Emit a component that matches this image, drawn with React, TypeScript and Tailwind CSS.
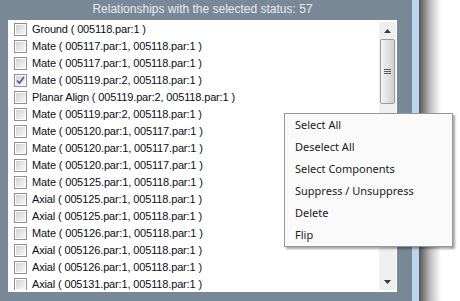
const rows = [
  { name: "Ground", refs: "005118.par:1", checked: false },
  { name: "Mate", refs: "005117.par:1, 005118.par:1", checked: false },
  { name: "Mate", refs: "005117.par:1, 005118.par:1", checked: false },
  { name: "Mate", refs: "005119.par:2, 005118.par:1", checked: true },
  { name: "Planar Align", refs: "005119.par:2, 005118.par:1", checked: false },
  { name: "Mate", refs: "005119.par:2, 005118.par:1", checked: false },
  { name: "Mate", refs: "005120.par:1, 005117.par:1", checked: false },
  { name: "Mate", refs: "005120.par:1, 005117.par:1", checked: false },
  { name: "Mate", refs: "005120.par:1, 005117.par:1", checked: false },
  { name: "Mate", refs: "005125.par:1, 005118.par:1", checked: false },
  { name: "Axial", refs: "005125.par:1, 005118.par:1", checked: false },
  { name: "Axial", refs: "005125.par:1, 005118.par:1", checked: false },
  { name: "Mate", refs: "005126.par:1, 005118.par:1", checked: false },
  { name: "Axial", refs: "005126.par:1, 005118.par:1", checked: false },
  { name: "Axial", refs: "005126.par:1, 005118.par:1", checked: false },
  { name: "Axial", refs: "005131.par:1, 005118.par:1", checked: false },
];

const menuItems = ["Select All", "Deselect All", "Select Components", "Suppress / Unsuppress", "Delete", "Flip"];

function CheckBox({ checked }: { checked: boolean }) {
  return (
    <div className="w-[13px] h-[13px] shrink-0 border border-[#8e8f8f] bg-white p-px">
      <div className="w-full h-full bg-gradient-to-br from-[#d2d2d2] to-[#f7f7f7] flex items-center justify-center">
        {checked && (
          <svg width="9" height="9" viewBox="0 0 9 9">
            <path d="M1 4.5 L3.5 7 L8 1" fill="none" stroke="#3d5aa8" strokeWidth="1.6" />
          </svg>
        )}
      </div>
    </div>
  );
}

function ScrollBar() {
  return (
    <div className="w-[17px] h-full bg-[#efefef] flex flex-col">
      <div className="h-[17px] flex items-center justify-center">
        <svg width="7" height="4" viewBox="0 0 7 4">
          <path d="M3.5 0 L7 4 L0 4 Z" fill="#3a3a3a" />
        </svg>
      </div>
      <div className="h-[65px] mx-px rounded-[2px] border border-[#9c9c9c] bg-gradient-to-r from-[#f4f4f4] via-[#e2e2e2] to-[#d0d0d0] flex flex-col items-center justify-center gap-px">
        <div className="w-[7px] h-px bg-[#5c5c5c]" />
        <div className="w-[7px] h-px bg-[#5c5c5c]" />
        <div className="w-[7px] h-px bg-[#5c5c5c]" />
      </div>
      <div className="flex-1" />
      <div className="h-[17px] flex items-center justify-center">
        <svg width="7" height="4" viewBox="0 0 7 4">
          <path d="M0 0 L7 0 L3.5 4 Z" fill="#3a3a3a" />
        </svg>
      </div>
    </div>
  );
}

export default function App() {
  return (
    <div className="relative w-[460px] h-[301px] flex bg-white overflow-hidden">
      <div className="w-[412px] h-full bg-[#798897] flex flex-col pl-2 pr-[15px]">
        <div className="h-5 text-center text-[12px] leading-[19px] text-[#e6ebf0] font-['Liberation_Sans',sans-serif]">
          Relationships with the selected status: 57
        </div>
        <div className="h-[272px] bg-white flex pt-[2px] pr-px pb-[2px]">
          <div className="flex-1 -mt-px overflow-hidden">
            {rows.map((row, i) => (
              <div key={i} className="h-[17px] flex items-center pl-[6px] gap-[5px]">
                <CheckBox checked={row.checked} />
                <span className="text-[11px] tracking-[-0.15px] text-[#0c0c1a] whitespace-nowrap font-['Liberation_Sans',sans-serif]">
                  {row.name} ( {row.refs} )
                </span>
              </div>
            ))}
          </div>
          <ScrollBar />
        </div>
      </div>
      <div className="w-[7px] h-full bg-[#bad5f0]" />
      <div className="w-[22px] h-full bg-gradient-to-r from-[#555555] via-[#bdbdbd] to-white" />

      <div className="absolute left-[284px] top-[113px] w-[169px] border border-[#979797] bg-[#fafafa] shadow-[2px_2px_2px_rgba(0,0,0,0.35)]">
        {menuItems.map((item) => (
          <div key={item} className="h-[22px] flex items-center pl-[10px] text-[11px] text-[#1a1a1a] font-['Noto_Sans',sans-serif]">
            {item}
          </div>
        ))}
      </div>
    </div>
  );
}
